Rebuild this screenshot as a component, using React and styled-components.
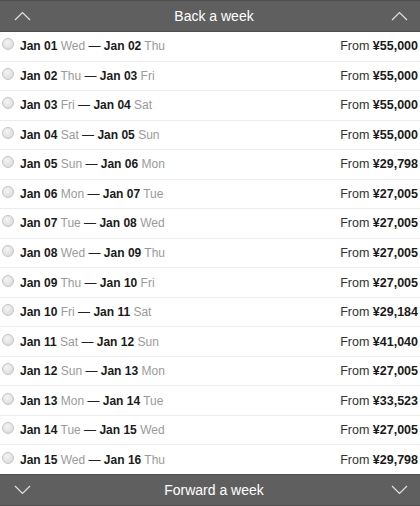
import React from 'react';
import styled, { createGlobalStyle } from 'styled-components';

const rows = [
  ['01', 'Wed', '02', 'Thu', '55,000'],
  ['02', 'Thu', '03', 'Fri', '55,000'],
  ['03', 'Fri', '04', 'Sat', '55,000'],
  ['04', 'Sat', '05', 'Sun', '55,000'],
  ['05', 'Sun', '06', 'Mon', '29,798'],
  ['06', 'Mon', '07', 'Tue', '27,005'],
  ['07', 'Tue', '08', 'Wed', '27,005'],
  ['08', 'Wed', '09', 'Thu', '27,005'],
  ['09', 'Thu', '10', 'Fri', '27,005'],
  ['10', 'Fri', '11', 'Sat', '29,184'],
  ['11', 'Sat', '12', 'Sun', '41,040'],
  ['12', 'Sun', '13', 'Mon', '27,005'],
  ['13', 'Mon', '14', 'Tue', '33,523'],
  ['14', 'Tue', '15', 'Wed', '27,005'],
  ['15', 'Wed', '16', 'Thu', '29,798'],
];

const Chevron = ({ up }) => (
  <svg width="17" height="10" viewBox="0 0 17 10">
    <polyline
      points={up ? '1,9 8.5,1.5 16,9' : '1,1 8.5,8.5 16,1'}
      fill="none"
      stroke="#e2e2e2"
      strokeWidth="1.2"
    />
  </svg>
);

function App() {
  return (
    <>
      <GlobalStyle />
      <Page>
        <NavBar>
          <Chevron up />
          <span>Back a week</span>
          <Chevron up />
        </NavBar>
        <List>
          {rows.map(([d1, w1, d2, w2, price]) => (
            <Row key={d1}>
              <Radio />
              <Dates>
                <b>Jan {d1}</b> <Day>{w1}</Day> — <b>Jan {d2}</b> <Day>{w2}</Day>
              </Dates>
              <Price>
                From <b>¥{price}</b>
              </Price>
            </Row>
          ))}
        </List>
        <NavBar>
          <Chevron />
          <span>Forward a week</span>
          <Chevron />
        </NavBar>
      </Page>
    </>
  );
}

export default App;

const GlobalStyle = createGlobalStyle`
  body {
    margin: 0;
    background: #fff;
    font-family: "Liberation Sans", Arial, sans-serif;
  }
`;

const Page = styled.div`
  width: 420px;
  height: 506px;
  display: flex;
  flex-direction: column;
  overflow: hidden;
`;

const NavBar = styled.div`
  height: 32px;
  flex: none;
  background: #5f5f5f;
  color: #fff;
  font-size: 14px;
  display: flex;
  align-items: center;
  justify-content: space-between;
  padding: 0 12px 0 14px;
  border-top: 1px solid #4e4e4e;
  border-bottom: 1px solid #4e4e4e;
  box-sizing: border-box;

  span {
    margin-left: 6px;
  }
`;

const List = styled.div`
  flex: 1;
  display: flex;
  flex-direction: column;
`;

const Row = styled.div`
  flex: 1;
  display: flex;
  align-items: center;
  padding: 0 2px 0 2px;
  border-bottom: 1px solid #ececec;
  font-size: 12px;
  color: #222;

  &:last-child {
    border-bottom: none;
  }

  b {
    font-weight: bold;
    color: #1a1a1a;
  }
`;

const Radio = styled.span`
  width: 12px;
  height: 12px;
  border-radius: 50%;
  border: 1px solid #c4c4c4;
  background: radial-gradient(circle at 40% 35%, #f4f4f4, #d6d6d6);
  box-sizing: border-box;
  margin: -4px 6px 0 0;
  flex: none;
`;

const Dates = styled.div`
  flex: 1;
  white-space: nowrap;
`;

const Day = styled.span`
  color: #9a9a9a;
`;

const Price = styled.div`
  white-space: nowrap;
  color: #333;
  font-size: 12.5px;
`;
